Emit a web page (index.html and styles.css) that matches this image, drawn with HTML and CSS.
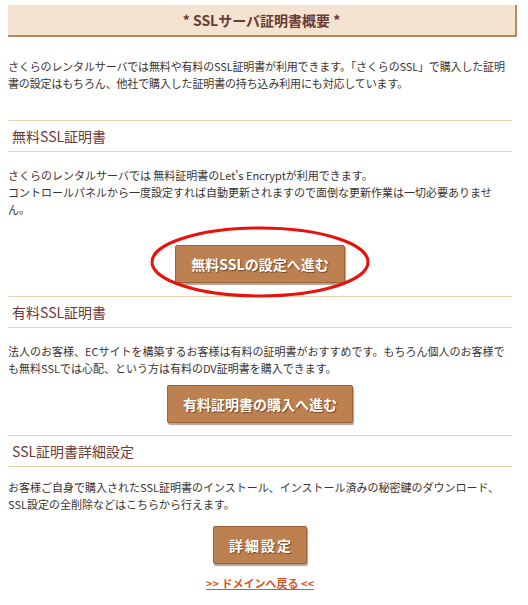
FILE: index.html
```html
<!DOCTYPE html>
<html lang="ja">
<head>
    <meta charset="UTF-8">
    <title>SSLサーバ証明書概要</title>
    <link rel="stylesheet" href="styles.css">
</head>
<body>
    <div class="page">
        <h1 class="page-title">* SSLサーバ証明書概要 *</h1>

        <p class="lead">さくらのレンタルサーバでは無料や有料のSSL証明書が利用できます。「さくらのSSL」で購入した証明書の設定はもちろん、他社で購入した証明書の持ち込み利用にも対応しています。</p>

        <h2 class="sec-title">無料SSL証明書</h2>
        <p class="sec-text">さくらのレンタルサーバでは 無料証明書のLet's Encryptが利用できます。<br>コントロールパネルから一度設定すれば自動更新されますので面倒な更新作業は一切必要ありません。</p>
        <div class="btn-row btn-row-free">
            <a class="btn" href="#">無料SSLの設定へ進む</a>
            <svg class="mark" width="222" height="74" viewBox="0 0 222 74">
                <ellipse cx="111" cy="37" rx="108" ry="34" fill="none" stroke="#e8120c" stroke-width="3"/>
            </svg>
        </div>

        <h2 class="sec-title">有料SSL証明書</h2>
        <p class="sec-text">法人のお客様、ECサイトを構築するお客様は有料の証明書がおすすめです。もちろん個人のお客様でも無料SSLでは心配、という方は有料のDV証明書を購入できます。</p>
        <div class="btn-row btn-row-paid">
            <a class="btn" href="#">有料証明書の購入へ進む</a>
        </div>

        <h2 class="sec-title">SSL証明書詳細設定</h2>
        <p class="sec-text sec-text-tight">お客様ご自身で購入されたSSL証明書のインストール、インストール済みの秘密鍵のダウンロード、<br>SSL設定の全削除などはこちらから行えます。</p>
        <div class="btn-row btn-row-detail">
            <a class="btn btn-wide" href="#">詳細設定</a>
        </div>

        <div class="back">
            <a href="#">&gt;&gt; ドメインへ戻る &lt;&lt;</a>
        </div>
    </div>
</body>
</html>
```

FILE: styles.css
```css
body {
    margin: 0;
    background: #fff;
    font-family: "Noto Sans CJK JP", "Noto Sans", sans-serif;
    color: #3b3330;
}
.page {
    width: 504px;
    padding: 5px 8px 0;
}
.page-title {
    margin: 0 -5px 0 0;
    height: 30px;
    line-height: 30px;
    background: #f4e3d0;
    border-right: 2px solid #b98a62;
    border-bottom: 2px solid #b98a62;
    text-align: center;
    font-size: 14px;
    font-weight: bold;
    color: #6a3a36;
}
.lead {
    margin: 21px 0 28px;
    font-size: 11px;
    line-height: 17px;
    letter-spacing: -0.15px;
}
.sec-title {
    margin: 0;
    padding: 6px 4px;
    line-height: 18px;
    border-top: 1px solid #e9d2b0;
    border-bottom: 1px solid #e9d2b0;
    font-size: 14px;
    font-weight: normal;
    color: #6a3a36;
}
.sec-text {
    margin: 15px 0 0;
    font-size: 11px;
    line-height: 17px;
}
.sec-text-tight {
    margin-top: 12px;
}
.btn-row {
    position: relative;
    display: flex;
    justify-content: center;
    padding: 13px 0;
}
.btn-row-free {
    padding-top: 27px;
}
.btn-row-paid {
    padding-top: 8px;
    padding-bottom: 12px;
}
.btn-row-detail {
    padding-bottom: 0;
}
.btn {
    display: inline-block;
    padding: 0 15px;
    height: 36px;
    line-height: 36px;
    background: #bd8050;
    border: 1px solid #9c6238;
    border-radius: 2px;
    box-shadow: 1px 2px 1px rgba(90, 50, 20, 0.45);
    color: #fff;
    font-size: 14px;
    font-weight: bold;
    text-decoration: none;
    text-shadow: 1px 1px 1px rgba(70, 30, 10, 0.6);
}
.btn-wide {
    padding: 0 13px 0 15px;
    letter-spacing: 2px;
}
.mark {
    position: absolute;
    left: 141px;
    top: 7px;
}
.back {
    text-align: center;
    padding: 11px 0 10px;
    font-size: 11px;
    line-height: 17px;
}
.back a {
    color: #d2571f;
    font-weight: bold;
}
```
